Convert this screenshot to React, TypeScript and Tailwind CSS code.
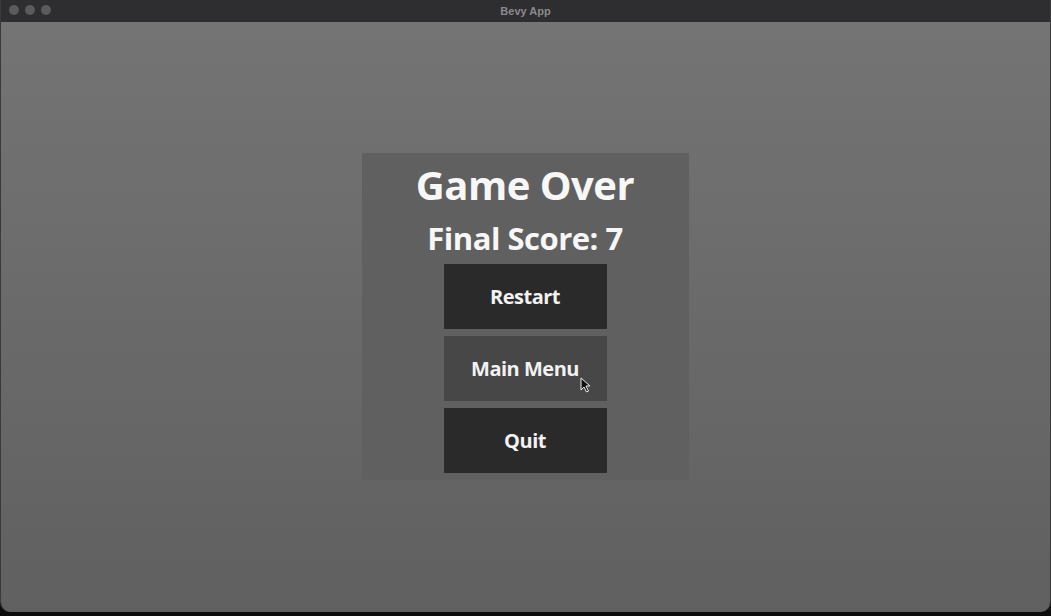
import React from "react";

const font = { fontFamily: '"Open Sans", "Noto Sans", "Liberation Sans", sans-serif' };

function MenuButton({ label, hover }: { label: string; hover?: boolean }) {
  return (
    <div
      className={`relative flex h-[65px] w-[163px] items-center justify-center ${
        hover ? "bg-[#474747]" : "bg-[#2a2a2a]"
      }`}
    >
      <span className="text-[20px] font-bold tracking-[-0.5px] text-[#f2f2f2]">{label}</span>
      {hover && (
        <svg className="absolute left-[136px] top-[41px]" width="11" height="16" viewBox="0 0 11 16">
          <path d="M1 1 L1 13 L4 10 L6.5 15 L8.5 14 L6 9 L10 9 Z" fill="#111" stroke="#eee" strokeWidth="1" />
        </svg>
      )}
    </div>
  );
}

export default function App() {
  return (
    <div className="h-[616px] w-[1051px] overflow-hidden bg-[#0d0d0d]" style={font}>
      <div className="flex h-[612px] flex-col overflow-hidden rounded-b-[10px] border-x border-[#3a3a3a]">
        <div className="relative flex h-[22px] shrink-0 items-center justify-center bg-[#2e2d30]">
          <div className="absolute left-[8px] top-[5px] flex gap-[6px]">
            <div className="h-[10px] w-[10px] rounded-full bg-[#5b5a5d]" />
            <div className="h-[10px] w-[10px] rounded-full bg-[#5b5a5d]" />
            <div className="h-[10px] w-[10px] rounded-full bg-[#5b5a5d]" />
          </div>
          <span className="text-[11px] font-bold text-[#8b8a8d]" style={{ fontFamily: '"Liberation Sans", sans-serif' }}>
            Bevy App
          </span>
        </div>
        <div className="flex flex-1 items-start justify-center bg-gradient-to-b from-[#747474] to-[#606060] pt-[131px]">
          <div className="ml-[-1px] flex h-[327px] w-[327px] flex-col items-center bg-[#606060] pt-[10px]">
            <h1 className="text-[40px] font-bold leading-[44px] tracking-[-0.5px] text-[#f7f7f7]">Game Over</h1>
            <p className="mt-[13px] text-[31px] font-bold leading-[36px] tracking-[-0.5px] text-[#f7f7f7]">Final Score: 7</p>
            <div className="mt-[8px] flex flex-col gap-[7px]">
              <MenuButton label="Restart" />
              <MenuButton label="Main Menu" hover />
              <MenuButton label="Quit" />
            </div>
          </div>
        </div>
      </div>
    </div>
  );
}
